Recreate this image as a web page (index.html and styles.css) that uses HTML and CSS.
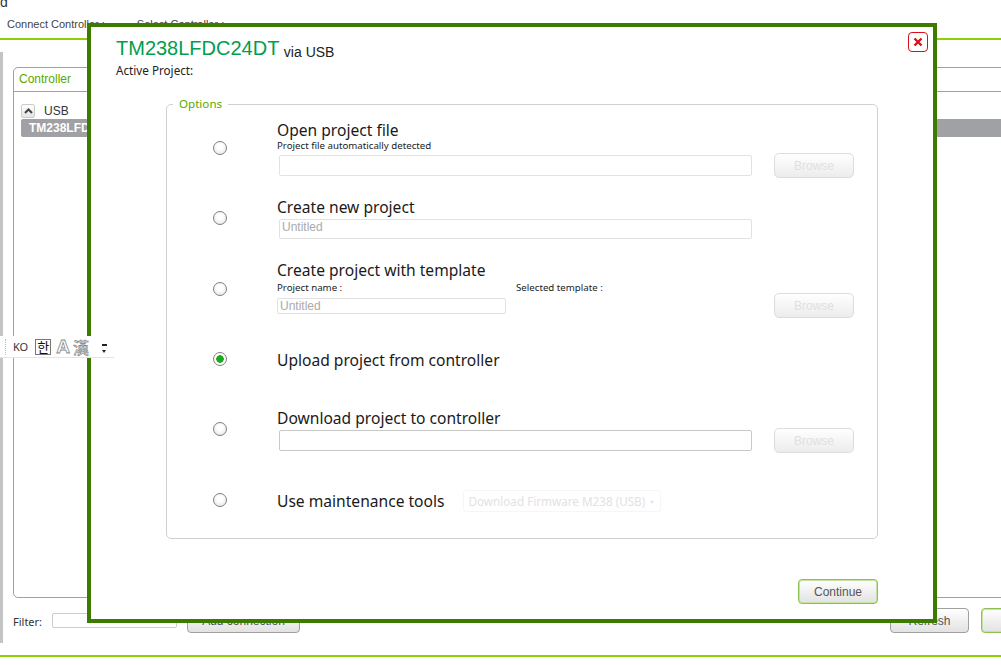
FILE: index.html
```html
<!DOCTYPE html>
<html lang="en">
<head>
  <meta charset="UTF-8">
  <meta name="viewport" content="width=device-width, initial-scale=1.0">
  <title>Connect Controller</title>
  <link rel="stylesheet" href="styles.css">
</head>
<body>
  <div class="app-title">d</div>
  <div class="tabs">
    <span class="tab">Connect Controller :</span>
    <span class="tab">Select Controller :</span>
  </div>

  <div class="main">
    <div class="side-bar"></div>
    <div class="content">
      <div class="panel">
        <div class="panel-head">Controller</div>
        <div class="panel-body">
          <div class="tree-group">
            <span class="collapse-btn">
              <svg width="9" height="6" viewBox="0 0 9 6"><path d="M1 5 L4.5 1.5 L8 5" fill="none" stroke="#444" stroke-width="2"/></svg>
            </span>
            <span>USB</span>
          </div>
          <div class="tree-item">TM238LFDC24DT</div>
        </div>
      </div>
      <div class="filter-row">
        <label class="filter-label">Filter:</label>
        <input class="filter-input" type="text">
        <button class="btn btn-add">Add connection</button>
        <button class="btn btn-refresh">Refresh</button>
        <button class="btn btn-green btn-next"></button>
      </div>
    </div>
  </div>
  <div class="bottom-line"></div>

  <div class="modal">
    <button class="close-btn">
      <svg width="10" height="10" viewBox="0 0 10 10"><path d="M1.5 1.5 L8.5 8.5 M8.5 1.5 L1.5 8.5" stroke="#d8101c" stroke-width="2.4"/></svg>
    </button>
    <div class="modal-title"><span class="controller-name">TM238LFDC24DT</span> <span class="via">via USB</span></div>
    <div class="active-project">Active Project:</div>

    <fieldset class="options">
      <legend>Options</legend>

      <div class="option">
        <div class="radio-cell"><span class="radio"></span></div>
        <div>
          <div class="option-title">Open project file</div>
          <div class="hint">Project file automatically detected</div>
          <input class="field field-open" type="text" disabled>
        </div>
        <button class="btn-browse" disabled>Browse</button>
      </div>

      <div class="option option-new">
        <div class="radio-cell"><span class="radio"></span></div>
        <div>
          <div class="option-title">Create new project</div>
          <input class="field field-new" type="text" value="Untitled" disabled>
        </div>
      </div>

      <div class="option option-template">
        <div class="radio-cell"><span class="radio"></span></div>
        <div class="template-body">
          <div class="option-title">Create project with template</div>
          <div class="template-labels">
            <span class="hint name-label">Project name :</span>
            <span class="hint">Selected template :</span>
          </div>
          <input class="field field-name" type="text" value="Untitled" disabled>
        </div>
        <button class="btn-browse" disabled>Browse</button>
      </div>

      <div class="option option-upload">
        <div class="radio-cell"><span class="radio radio-up radio-on"></span></div>
        <div class="option-title">Upload project from controller</div>
      </div>

      <div class="option option-download">
        <div class="radio-cell"><span class="radio radio-up"></span></div>
        <div>
          <div class="option-title">Download project to controller</div>
          <input class="field field-download" type="text" disabled>
        </div>
        <button class="btn-browse" disabled>Browse</button>
      </div>

      <div class="option option-tools">
        <div class="radio-cell"><span class="radio radio-up"></span></div>
        <div class="tools-line">
          <div class="option-title">Use maintenance tools</div>
          <div class="tools-select">Download Firmware M238 (USB)<span class="caret"></span></div>
        </div>
      </div>
    </fieldset>

    <div class="modal-actions">
      <button class="btn btn-green btn-continue">Continue</button>
    </div>
  </div>

  <div class="ime-bar">
    <span class="ime-grip"></span>
    <span class="ime-lang">KO</span>
    <span class="ime-han">한</span>
    <span class="ime-outline ime-a">A</span>
    <span class="ime-outline ime-hanja">漢</span>
    <span class="ime-more"></span>
  </div>
</body>
</html>
```

FILE: styles.css
```css
html, body {
  margin: 0;
  padding: 0;
  height: 665px;
  overflow: hidden;
  background: #fff;
  font-family: "Liberation Sans", Arial, sans-serif;
  color: #222;
}
.app-title {
  height: 14px;
  line-height: 4px;
  font-size: 14px;
  overflow: hidden;
  color: #333;
}
.tabs {
  display: flex;
  gap: 32px;
  height: 24px;
  line-height: 20px;
  padding-left: 7px;
  font-size: 11px;
  color: #444;
  border-bottom: 2px solid #8cd200;
}
.main {
  display: flex;
  height: 615px;
  padding-top: 12px;
  box-sizing: border-box;
}
.side-bar {
  flex: none;
  width: 3px;
  height: 591px;
  background: #c4c4c4;
}
.content {
  flex: none;
  width: 1010px;
  margin-left: 10px;
  padding-top: 15px;
}
.panel {
  height: 531px;
  box-sizing: border-box;
  border: 1px solid #a0a0a0;
  border-radius: 5px;
}
.panel-head {
  height: 23px;
  line-height: 22px;
  padding-left: 5px;
  font-size: 12px;
  color: #57a900;
  border-bottom: 1px solid #a0a0a0;
}
.panel-body {
  padding-top: 9px;
  padding-left: 7px;
}
.tree-group {
  display: flex;
  align-items: center;
  gap: 9px;
  height: 18px;
  box-sizing: border-box;
  padding-top: 1px;
  font-size: 12px;
  color: #333;
}
.collapse-btn {
  display: flex;
  align-items: center;
  justify-content: center;
  width: 14px;
  height: 14px;
  box-sizing: border-box;
  border: 1px solid #ccc;
  border-radius: 2px;
  background: linear-gradient(#fff, #e4e4e4);
}
.tree-item {
  height: 18px;
  line-height: 18px;
  padding-left: 8px;
  border-radius: 2px;
  background: #a0a1a4;
  color: #fff;
  font-size: 12px;
  font-weight: bold;
}
.filter-row {
  display: flex;
  align-items: flex-start;
  padding-top: 10px;
}
.filter-label {
  width: 39px;
  margin-top: 6px;
  font-family: "Noto Sans", sans-serif;
  font-size: 11px;
  color: #333;
}
.filter-input {
  width: 125px;
  height: 15px;
  margin-top: 5px;
  padding: 0;
  box-sizing: border-box;
  border: 1px solid #ccc;
  border-radius: 2px;
}
.btn {
  height: 25px;
  box-sizing: border-box;
  border: 1px solid #a0a0a0;
  border-radius: 4px;
  background: linear-gradient(#fff, #e2e2e2);
  font-family: "Liberation Sans", Arial, sans-serif;
  font-size: 12px;
  color: #555;
  padding: 0;
}
.btn-add {
  width: 113px;
  margin-left: 10px;
}
.btn-refresh {
  width: 79px;
  margin-left: 590px;
}
.btn-green {
  border-color: #8cc152;
  box-shadow: inset 0 0 0 1px #c6e2a4;
}
.btn-next {
  width: 40px;
  margin-left: 12px;
}
.bottom-line {
  height: 2px;
  background: #8cd200;
}

/* dialog sits over the page */
.modal {
  position: absolute;
  left: 87px;
  top: 23px;
  width: 850px;
  height: 600px;
  box-sizing: border-box;
  border: 4px solid #3c7a00;
  background: #fff;
}
.close-btn {
  position: absolute;
  right: 5px;
  top: 5px;
  display: flex;
  align-items: center;
  justify-content: center;
  width: 20px;
  height: 20px;
  padding: 0;
  box-sizing: border-box;
  border: 1px solid #d8101c;
  border-radius: 4px;
  background: #fff;
}
.modal-title {
  height: 24px;
  line-height: 24px;
  padding-top: 9px;
  padding-left: 25px;
}
.controller-name {
  font-size: 20px;
  color: #009e4d;
}
.via {
  font-size: 14px;
  color: #222;
  vertical-align: -2px;
}
.active-project {
  height: 16px;
  line-height: 16px;
  margin-top: 2px;
  padding-left: 25px;
  font-family: "Noto Sans", sans-serif;
  font-size: 11.7px;
  color: #222;
}
.options {
  width: 712px;
  height: 443px;
  box-sizing: border-box;
  margin: 18px 0 0 75px;
  padding: 8px 0 0 0;
  border: 1px solid #d0d0d0;
  border-radius: 5px;
  min-width: 0;
}
.options legend {
  margin-left: 6px;
  padding: 0 6px;
  height: 16px;
  line-height: 16px;
  font-family: "Noto Sans", sans-serif;
  font-size: 11.6px;
  color: #57a900;
}
.option {
  display: grid;
  grid-template-columns: 110px 475px 102px;
  align-items: center;
}
.radio-cell {
  padding-left: 46px;
  display: flex;
}
.radio {
  display: block;
  width: 14px;
  height: 14px;
  box-sizing: border-box;
  border: 1.5px solid #808080;
  border-radius: 50%;
  background: radial-gradient(circle at 50% 40%, #fff 30%, #dedede 100%);
}
.radio-up {
  margin-top: -2px;
}
.radio-on {
  background: radial-gradient(circle, #1ea91e 0 3.5px, #fff 4px);
}
.option-title {
  height: 20px;
  line-height: 20px;
  font-family: "Noto Sans", sans-serif;
  font-size: 15.6px;
  color: #1a1a1a;
  white-space: nowrap;
}
.hint {
  height: 12px;
  line-height: 12px;
  font-family: "Noto Sans", sans-serif;
  font-size: 9.7px;
  color: #222;
}
.field {
  display: block;
  box-sizing: border-box;
  border: 1px solid #e2e2e2;
  border-radius: 2px;
  background: #fff;
  padding: 0 2px;
  font-family: "Liberation Sans", Arial, sans-serif;
  font-size: 12px;
  color: #aaa;
}
.field-open {
  width: 473px;
  height: 21px;
  margin: 3px 0 0 2px;
}
.field-new {
  width: 473px;
  height: 20px;
  margin: 2px 0 0 2px;
  padding-bottom: 4px;
}
.field-name {
  width: 229px;
  height: 16px;
  margin-top: 4px;
}
.field-download {
  width: 473px;
  height: 21px;
  margin: 2px 0 0 2px;
  border-color: #c8c8c8;
}
.btn-browse {
  align-self: end;
  width: 80px;
  height: 25px;
  margin-left: 22px;
  margin-bottom: -2px;
  padding: 0;
  box-sizing: border-box;
  border: 1px solid #dcdcdc;
  border-radius: 5px;
  background: linear-gradient(#fff, #ececec);
  font-family: "Liberation Sans", Arial, sans-serif;
  font-size: 12px;
  color: #e0e0e0;
}
.option-new,
.option-template {
  margin-top: 21px;
}
.template-body {
  padding-bottom: 4px;
}
.option-template .btn-browse {
  margin-bottom: 0;
}
.template-labels {
  display: flex;
  height: 12px;
  margin-top: 2px;
}
.name-label {
  width: 239px;
}
.option-upload {
  margin-top: 32px;
}
.option-download {
  margin-top: 38px;
}
.option-tools {
  margin-top: 39px;
}
.tools-line {
  display: flex;
  align-items: center;
  gap: 19px;
}
.tools-select {
  width: 198px;
  height: 22px;
  box-sizing: border-box;
  line-height: 20px;
  padding-left: 4px;
  border: 1px solid #f6f6f6;
  border-radius: 3px;
  font-family: "Noto Sans", sans-serif;
  font-size: 11.7px;
  color: #e2e2e2;
  white-space: nowrap;
}
.caret {
  display: inline-block;
  margin-left: 5px;
  vertical-align: middle;
  border-left: 2px solid transparent;
  border-right: 2px solid transparent;
  border-top: 3px solid #e2e2e2;
}
.modal-actions {
  display: flex;
  justify-content: flex-end;
  margin-top: 40px;
  padding-right: 55px;
}
.btn-continue {
  width: 80px;
  height: 25px;
}

/* windows language bar floats on top of everything */
.ime-bar {
  position: absolute;
  left: 0;
  top: 336px;
  width: 114px;
  height: 22px;
  box-sizing: border-box;
  display: flex;
  align-items: center;
  background: #fff;
  border-bottom: 1px solid #e4e4e4;
}
.ime-grip {
  width: 2px;
  height: 16px;
  margin-left: 5px;
  border-left: 1px dotted #bbb;
}
.ime-lang {
  margin-left: 5px;
  font-family: "Noto Sans", sans-serif;
  font-size: 11px;
  color: #333;
}
.ime-han {
  width: 16px;
  height: 16px;
  box-sizing: border-box;
  margin-left: 7px;
  border: 1px solid #777;
  line-height: 13px;
  text-align: center;
  font-family: "Noto Sans CJK KR", sans-serif;
  font-size: 13px;
  color: #111;
}
.ime-outline {
  font-size: 19px;
  line-height: 20px;
  color: #fff;
  -webkit-text-stroke: 0.8px #8a8a8a;
}
.ime-a {
  margin-left: 5px;
  font-family: "Liberation Sans", Arial, sans-serif;
  font-weight: bold;
}
.ime-hanja {
  margin-left: 3px;
  font-size: 16px;
  font-family: "Noto Sans CJK KR", sans-serif;
  -webkit-text-stroke: 0.5px #666;
}
.ime-more {
  width: 5px;
  height: 3px;
  margin-left: 13px;
  border-top: 2px solid #222;
  position: relative;
}
.ime-more::after {
  content: "";
  position: absolute;
  left: 0;
  top: 4px;
  border-left: 2.5px solid transparent;
  border-right: 2.5px solid transparent;
  border-top: 3px solid #222;
}
```
